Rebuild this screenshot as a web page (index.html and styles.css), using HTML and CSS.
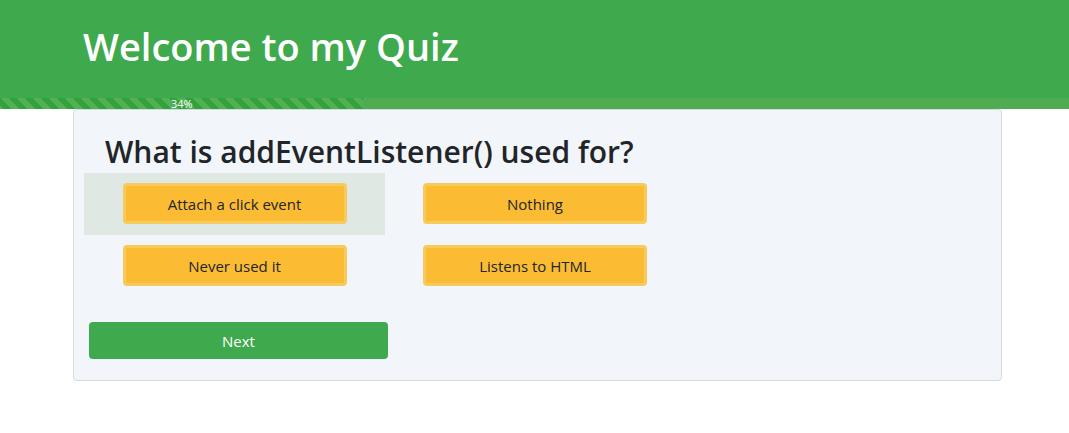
FILE: index.html
```html
<!DOCTYPE html>
<html lang="en">
<head>
<meta charset="utf-8">
<title>Quiz</title>
<link rel="stylesheet" href="styles.css">
</head>
<body>
<header class="hero">
  <h1 class="hero-title">Welcome to my Quiz</h1>
</header>
<div class="progress">
  <div class="progress-bar" style="width: 34%">34%</div>
</div>
<main class="card">
  <h2 class="question">What is addEventListener() used for?</h2>
  <div class="answers">
    <div class="answer-cell selected"><button class="answer">Attach a click event</button></div>
    <div class="answer-cell"><button class="answer">Nothing</button></div>
    <div class="answer-cell"><button class="answer">Never used it</button></div>
    <div class="answer-cell"><button class="answer">Listens to HTML</button></div>
  </div>
  <button class="next">Next</button>
</main>
</body>
</html>
```

FILE: styles.css
```css
* { box-sizing: border-box; }
body {
  margin: 0;
  font-family: "Open Sans", "Noto Sans", sans-serif;
  color: #212529;
  background: #fff;
}
.hero {
  background: #3fa94e;
  height: 98px;
  padding-left: 83px;
  display: flex;
  align-items: center;
}
.hero-title {
  margin: 0;
  color: #fff;
  font-size: 38px;
  font-weight: 600;
  line-height: 1;
  padding-bottom: 6px;
}
.progress {
  height: 11px;
  background: #50ac50;
  display: flex;
}
.progress-bar {
  background-color: #34a23a;
  background-image: linear-gradient(45deg, rgba(255,255,255,.15) 25%, transparent 25%, transparent 50%, rgba(255,255,255,.15) 50%, rgba(255,255,255,.15) 75%, transparent 75%, transparent);
  background-size: 16px 16px;
  color: #fff;
  font-size: 11px;
  line-height: 11px;
  text-align: center;
  white-space: nowrap;
}
.card {
  margin: 0 0 0 73px;
  width: 929px;
  background: #f2f5fa;
  border: 1px solid #d6d9dd;
  border-radius: 4px;
  padding: 10px 10px 21px 10px;
}
.question {
  margin: 11px 0 0 21px;
  font-size: 30px;
  font-weight: 600;
  line-height: 42px;
}
.answers {
  display: grid;
  grid-template-columns: 301px 300px;
  grid-auto-rows: 62px;
}
.answer-cell {
  display: flex;
  justify-content: center;
  align-items: flex-start;
  padding-top: 10px;
}
.answer-cell.selected { background: #e0e8e3; }
.answer {
  width: 224px;
  height: 41px;
  background: #fbbc34;
  border: 3px solid #f7ca5e;
  border-radius: 4px;
  font-family: inherit;
  font-size: 15px;
  color: #212529;
  cursor: pointer;
}
.next {
  display: block;
  margin: 25px 0 0 5px;
  width: 299px;
  height: 37px;
  background: #3fa94e;
  color: #fff;
  border: none;
  border-radius: 4px;
  font-family: inherit;
  font-size: 15px;
  cursor: pointer;
}
```
